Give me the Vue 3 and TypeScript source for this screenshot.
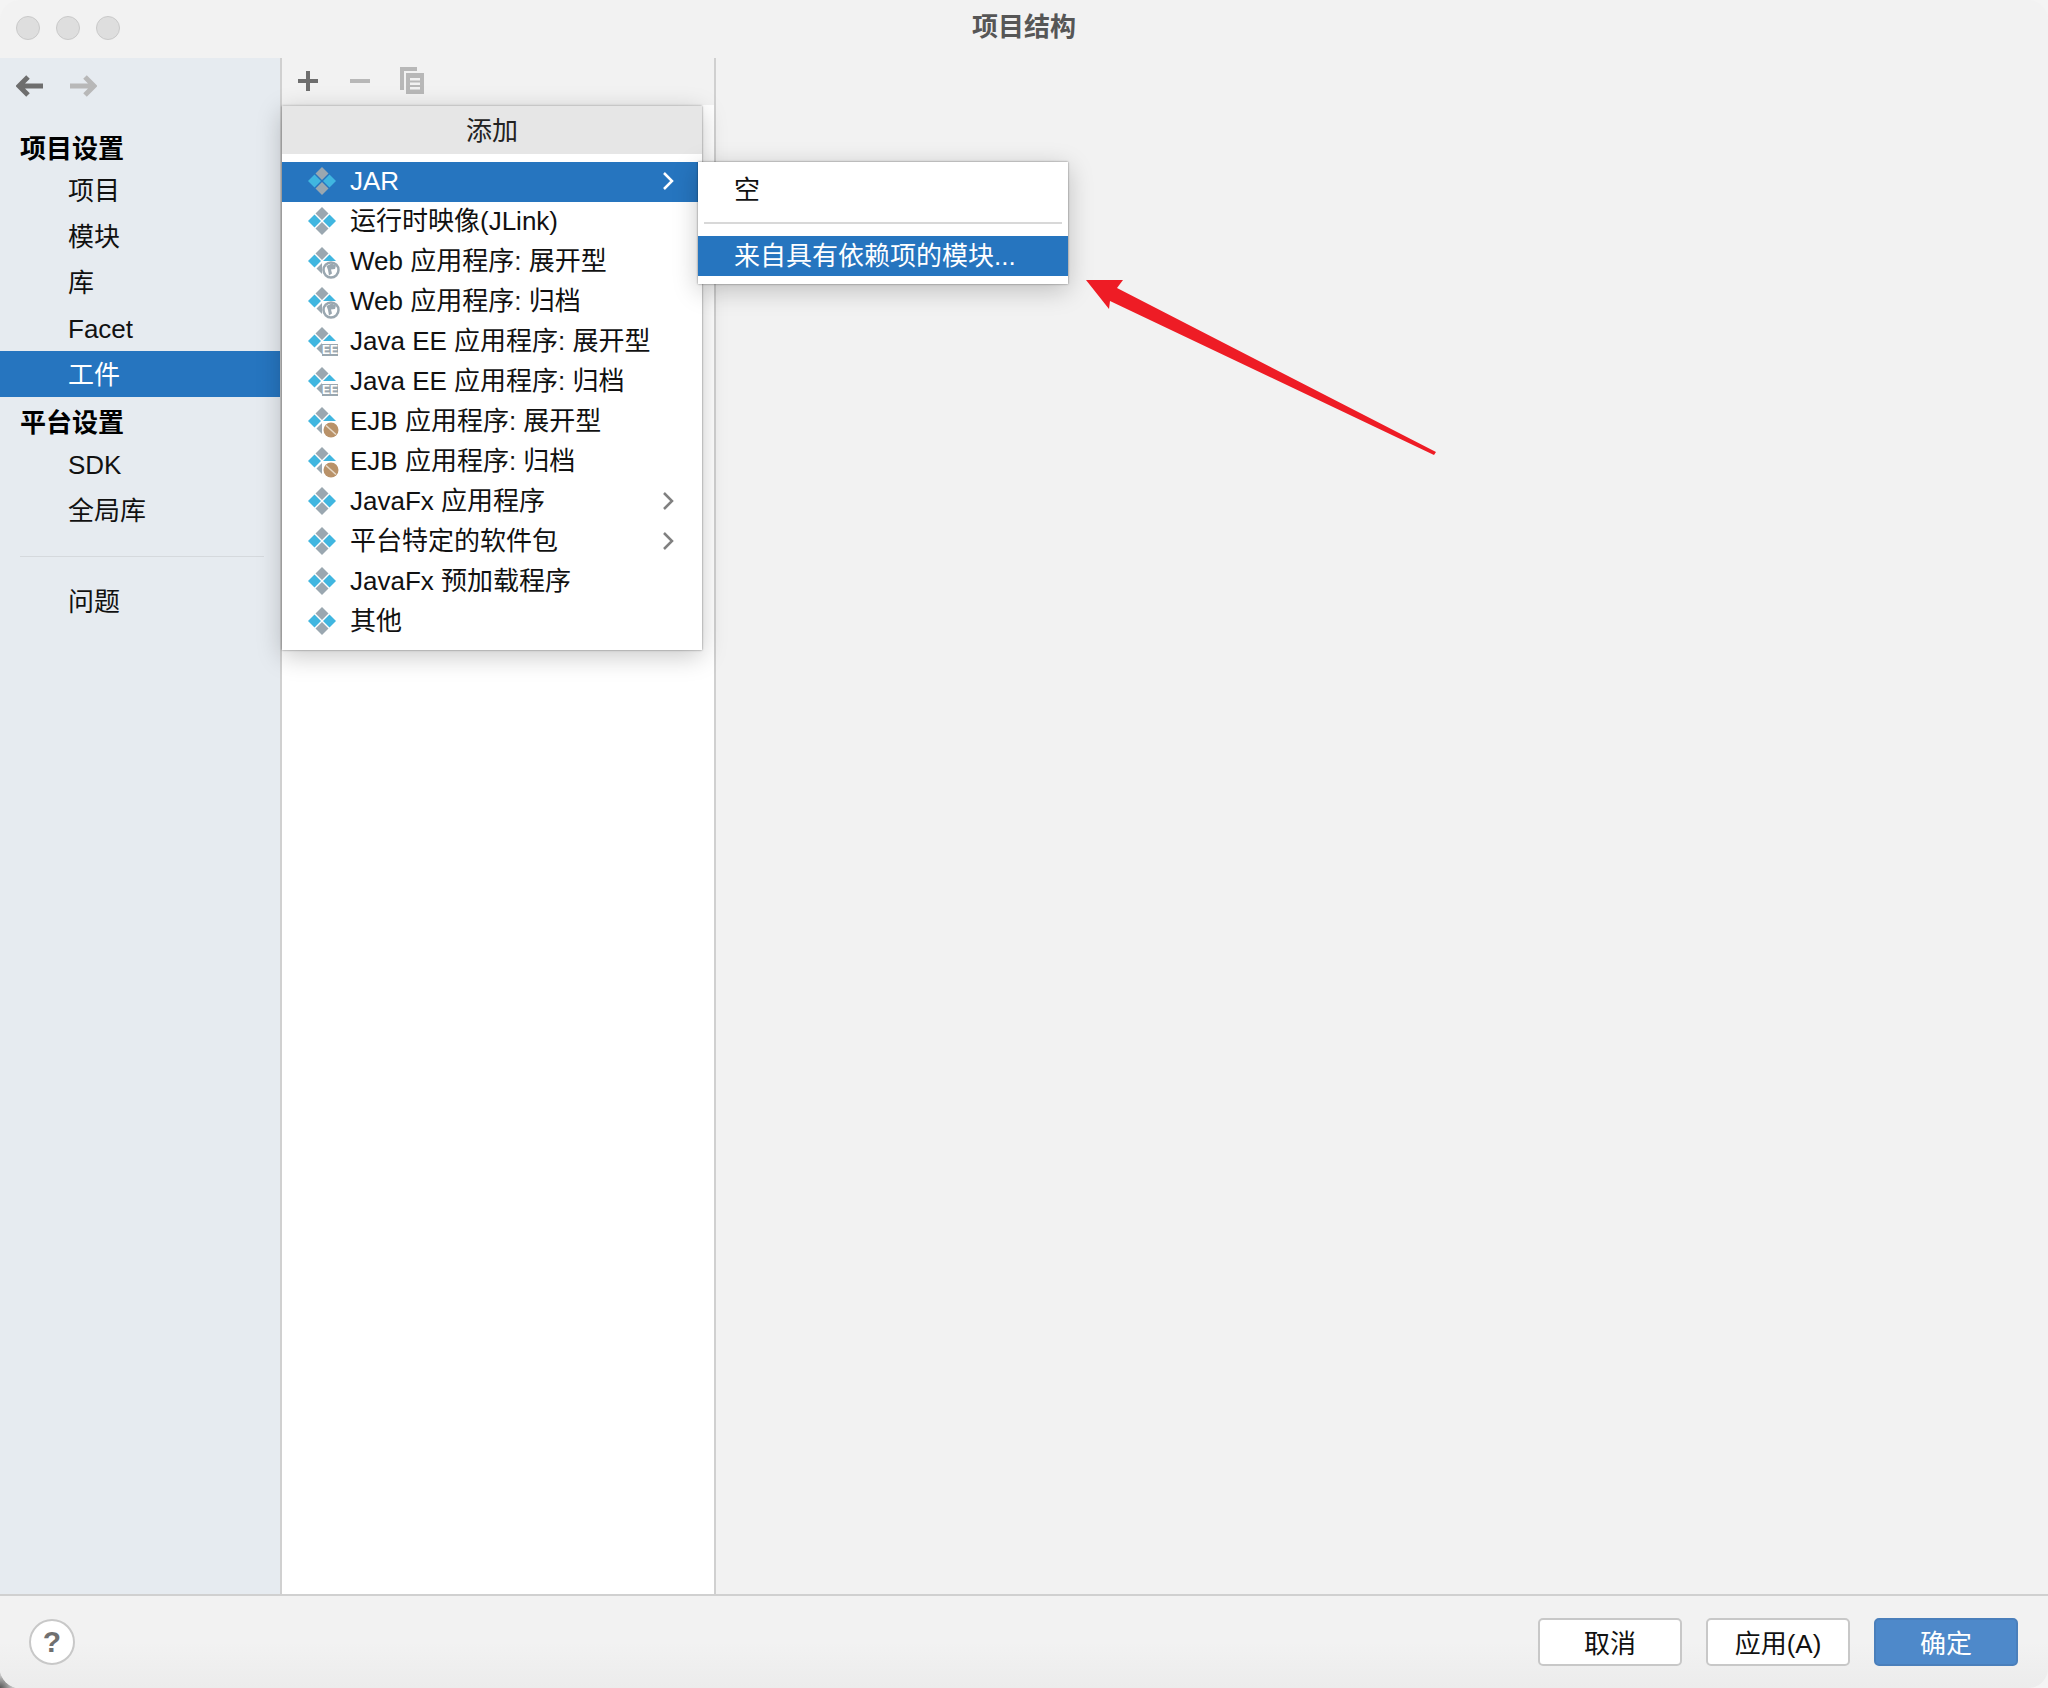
<template>
  <div class="window">
    <div class="title-bar">
      <div class="lights">
        <span class="light"></span>
        <span class="light"></span>
        <span class="light"></span>
      </div>
      <span class="title">项目结构</span>
    </div>

    <div class="main">
      <aside class="sidebar">
        <div class="nav-arrows">
          <svg width="28" height="22" viewBox="0 0 28 22" class="back">
            <path d="M27 11H5M12 2l-9 9 9 9" />
          </svg>
          <svg width="28" height="22" viewBox="0 0 28 22" class="forward">
            <path d="M1 11h22M16 2l9 9-9 9" />
          </svg>
        </div>
        <template v-for="item in sideItems" :key="item.label">
          <div v-if="item.kind === 'head'" class="side-head">{{ item.label }}</div>
          <div v-else-if="item.kind === 'line'" class="side-line"></div>
          <div v-else class="side-item" :class="{ active: item.active }">{{ item.label }}</div>
        </template>
      </aside>

      <section class="list-panel">
        <div class="toolbar">
          <svg width="20" height="20" viewBox="0 0 20 20" class="tool-plus">
            <path d="M0 10h20M10 0v20" />
          </svg>
          <svg width="20" height="20" viewBox="0 0 20 20" class="tool-minus">
            <path d="M0 10h20" />
          </svg>
          <svg width="26" height="28" viewBox="0 0 26 28" class="tool-copy">
            <path d="M1 0h17v4H5v19H1z" />
            <path fill-rule="evenodd" d="M7 6h18v21H7zM11 11v2.500h10V11zM11 15.500V18h10v-2.500zM11 20v2.500h10V20z" />
          </svg>
        </div>
        <div class="list-body"></div>
      </section>

      <section class="detail"></section>

      <!-- popup menus lie over the panels -->
      <div class="menu">
        <div class="menu-head">添加</div>
        <div class="menu-rows">
          <div v-for="row in menuRows" :key="row.label" class="menu-row" :class="{ selected: row.selected }">
            <svg width="34" height="34" viewBox="0 0 34 34" class="row-icon">
              <path class="d-grey" d="M16 2l6.500 6.500L16 15 9.500 8.500z" />
              <path class="d-blue" d="M8.500 9.500L15 16l-6.500 6.500L2 16z" />
              <template v-if="row.icon === 'plain'">
                <path class="d-blue" d="M23.500 9.500L30 16l-6.500 6.500L17 16z" />
                <path class="d-grey" d="M16 17l6.500 6.500L16 30l-6.500-6.500z" />
              </template>
              <template v-else>
                <path class="d-blue" d="M23.500 9.500l6.500 6.500H17z" />
                <path class="d-grey" d="M16 18v11l-5.500-5.500z" />
              </template>
              <g v-if="row.icon === 'web'">
                <circle cx="25" cy="25" r="9" class="halo" />
                <circle cx="25" cy="25" r="7.500" class="globe" />
                <path class="globe-land" d="M20.500 21l5-2.500 4.500 2-1 3.500-4 .5 1 4-3 2-1-5.500z" />
              </g>
              <g v-if="row.icon === 'ee'">
                <rect x="16" y="19" width="16" height="12" class="ee-box" />
                <text x="24" y="29" class="ee-text">EE</text>
              </g>
              <g v-if="row.icon === 'ejb'">
                <circle cx="25" cy="25" r="9" class="halo" />
                <circle cx="25" cy="25" r="7.500" class="bean" />
                <path class="bean-line" d="M20 20.500l10 9" />
              </g>
            </svg>
            <span class="row-label">{{ row.label }}</span>
            <svg v-if="row.sub" width="12" height="20" viewBox="0 0 12 20" class="row-chevron">
              <path d="M2 2l8 8-8 8" />
            </svg>
          </div>
        </div>
      </div>

      <div class="submenu">
        <div class="sub-row">空</div>
        <div class="sub-sep"></div>
        <div class="sub-row selected">来自具有依赖项的模块...</div>
      </div>

      <svg class="red-arrow" width="350" height="175" viewBox="0 0 350 175">
        <path d="M0 0h37l-6 8 319 164-2 3-324-154-1 8z" />
      </svg>
    </div>

    <div class="footer">
      <div class="help">?</div>
      <div class="actions">
        <button class="btn">取消</button>
        <button class="btn">应用(A)</button>
        <button class="btn primary">确定</button>
      </div>
    </div>
  </div>
</template>

<script setup lang="ts">
interface SideItem {
  kind: 'head' | 'item' | 'line'
  label: string
  active?: boolean
}

interface MenuRow {
  label: string
  icon: 'plain' | 'web' | 'ee' | 'ejb'
  sub?: boolean
  selected?: boolean
}

const sideItems: SideItem[] = [
  { kind: 'head', label: '项目设置' },
  { kind: 'item', label: '项目' },
  { kind: 'item', label: '模块' },
  { kind: 'item', label: '库' },
  { kind: 'item', label: 'Facet' },
  { kind: 'item', label: '工件', active: true },
  { kind: 'head', label: '平台设置' },
  { kind: 'item', label: 'SDK' },
  { kind: 'item', label: '全局库' },
  { kind: 'line', label: 'line' },
  { kind: 'item', label: '问题' }
]

const menuRows: MenuRow[] = [
  { label: 'JAR', icon: 'plain', sub: true, selected: true },
  { label: '运行时映像(JLink)', icon: 'plain' },
  { label: 'Web 应用程序: 展开型', icon: 'web' },
  { label: 'Web 应用程序: 归档', icon: 'web' },
  { label: 'Java EE 应用程序: 展开型', icon: 'ee' },
  { label: 'Java EE 应用程序: 归档', icon: 'ee' },
  { label: 'EJB 应用程序: 展开型', icon: 'ejb' },
  { label: 'EJB 应用程序: 归档', icon: 'ejb' },
  { label: 'JavaFx 应用程序', icon: 'plain', sub: true },
  { label: '平台特定的软件包', icon: 'plain', sub: true },
  { label: 'JavaFx 预加载程序', icon: 'plain' },
  { label: '其他', icon: 'plain' }
]
</script>

<style>
html {
  background: radial-gradient(circle 18px at 0 1688px, #555, transparent), #f4f4f4;
}

html,
body {
  margin: 0;
}
</style>

<style scoped>
.window {
  width: 2048px;
  height: 1688px;
  display: flex;
  flex-direction: column;
  background: #f2f2f2;
  border-radius: 20px;
  overflow: hidden;
  font-family: "Liberation Sans", "Noto Sans CJK SC", sans-serif;
  font-size: 26px;
  color: #111;
}

.title-bar {
  height: 58px;
  flex: none;
  display: flex;
  align-items: center;
  justify-content: center;
  position: relative;
}

.lights {
  position: absolute;
  left: 16px;
  top: 16px;
  display: flex;
  gap: 16px;
}

.light {
  width: 24px;
  height: 24px;
  box-sizing: border-box;
  border-radius: 50%;
  background: #dedede;
  border: 1px solid #c9c9c9;
}

.title {
  color: #565656;
  font-weight: 700;
  line-height: 30px;
  margin-top: -4px;
}

.main {
  flex: 1;
  display: flex;
  position: relative;
  min-height: 0;
}

.sidebar {
  width: 282px;
  flex: none;
  box-sizing: border-box;
  background: #e6ebf0;
  border-right: 2px solid #d0d0d0;
  padding-top: 17px;
}

.nav-arrows {
  display: flex;
  gap: 25px;
  padding-left: 16px;
  height: 22px;
  margin-bottom: 32px;
}

.nav-arrows svg {
  fill: none;
  stroke-width: 5;
}

.back {
  stroke: #6e6e6e;
}

.forward {
  stroke: #b8b8b8;
}

.side-head {
  height: 38px;
  line-height: 40px;
  padding-left: 20px;
  font-weight: 700;
  color: #000;
}

.side-item + .side-head {
  margin-top: 6px;
}

.side-item {
  height: 46px;
  line-height: 48px;
  padding-left: 68px;
}

.side-item.active {
  background: #2675bf;
  color: #fff;
}

.side-line {
  height: 1px;
  margin: 23px 16px 21px 20px;
  background: #d5d9dd;
}

.list-panel {
  width: 434px;
  flex: none;
  box-sizing: border-box;
  display: flex;
  flex-direction: column;
  border-right: 2px solid #d0d0d0;
}

.toolbar {
  height: 47px;
  flex: none;
  display: flex;
  align-items: center;
  gap: 32px;
  padding-left: 16px;
  box-sizing: border-box;
}

.toolbar svg {
  margin-top: -1px;
}

.tool-plus {
  fill: none;
  stroke: #6e6e6e;
  stroke-width: 4;
}

.tool-minus {
  fill: none;
  stroke: #b8b8b8;
  stroke-width: 4;
}

.tool-copy {
  fill: #b8b8b8;
  margin-left: -3px;
}

.list-body {
  flex: 1;
  background: #fff;
}

.detail {
  flex: 1;
}

.menu {
  position: absolute;
  left: 282px;
  top: 48px;
  width: 420px;
  height: 544px;
  background: #fff;
  box-shadow: 0 0 2px rgba(0, 0, 0, 0.5), 0 6px 24px rgba(0, 0, 0, 0.22);
}

.menu-head {
  height: 48px;
  line-height: 50px;
  text-align: center;
  background: #e6e6e6;
  color: #222;
}

.menu-rows {
  padding-top: 8px;
}

.menu-row {
  height: 40px;
  display: flex;
  align-items: center;
  padding-left: 24px;
  color: #111;
}

.menu-row.selected {
  background: #2675bf;
  color: #fff;
}

.row-icon {
  flex: none;
  margin-right: 10px;
}

.d-grey {
  fill: #9aa7b0;
}

.d-blue {
  fill: #40b6e0;
}

.halo {
  fill: #fff;
}

.globe {
  fill: #fff;
  stroke: #9aa7b0;
  stroke-width: 2.500;
}

.globe-land {
  fill: #9aa7b0;
}

.ee-box {
  fill: #9aa7b0;
}

.ee-text {
  fill: #fff;
  font-family: "Liberation Sans", sans-serif;
  font-size: 12px;
  font-weight: 700;
  text-anchor: middle;
}

.bean {
  fill: #b99269;
}

.bean-line {
  fill: none;
  stroke: #e6d9c8;
  stroke-width: 1.500;
}

.row-label {
  flex: 1;
  white-space: nowrap;
  line-height: 38px;
  height: 40px;
}

.row-chevron {
  flex: none;
  margin: -2px 28px 0 0;
  fill: none;
  stroke: #808080;
  stroke-width: 2.500;
}

.selected .row-chevron {
  stroke: #fff;
}

.submenu {
  position: absolute;
  left: 698px;
  top: 104px;
  width: 370px;
  height: 122px;
  padding-top: 8px;
  box-sizing: border-box;
  background: #fff;
  box-shadow: 0 0 2px rgba(0, 0, 0, 0.5), 0 6px 24px rgba(0, 0, 0, 0.22);
}

.sub-row {
  height: 40px;
  line-height: 40px;
  padding-left: 36px;
}

.sub-row.selected {
  background: #2675bf;
  color: #fff;
}

.sub-sep {
  height: 2px;
  margin: 12px 6px 12px 6px;
  background: #d8d8d8;
}

.red-arrow {
  position: absolute;
  left: 1086px;
  top: 222px;
  fill: #ee1c25;
}

.footer {
  height: 94px;
  flex: none;
  box-sizing: border-box;
  border-top: 2px solid #d0d0d0;
  background: linear-gradient(#f2f2f2 50%, #ececec);
  display: flex;
  align-items: center;
  justify-content: space-between;
  padding: 0 30px 0 29px;
}

.help {
  width: 46px;
  height: 46px;
  box-sizing: border-box;
  border-radius: 50%;
  background: #fff;
  border: 2px solid #c8c8c8;
  color: #707070;
  font-family: "Liberation Sans", sans-serif;
  font-weight: 700;
  font-size: 30px;
  line-height: 42px;
  text-align: center;
}

.actions {
  display: flex;
  gap: 24px;
}

.btn {
  width: 144px;
  height: 48px;
  box-sizing: border-box;
  border: 2px solid #c8c8c8;
  border-radius: 5px;
  background: #fff;
  color: #111;
  font: inherit;
  padding: 0 0 2px;
}

.btn.primary {
  background: #4e89ca;
  border-color: #4a7fbb;
  color: #fff;
}
</style>
